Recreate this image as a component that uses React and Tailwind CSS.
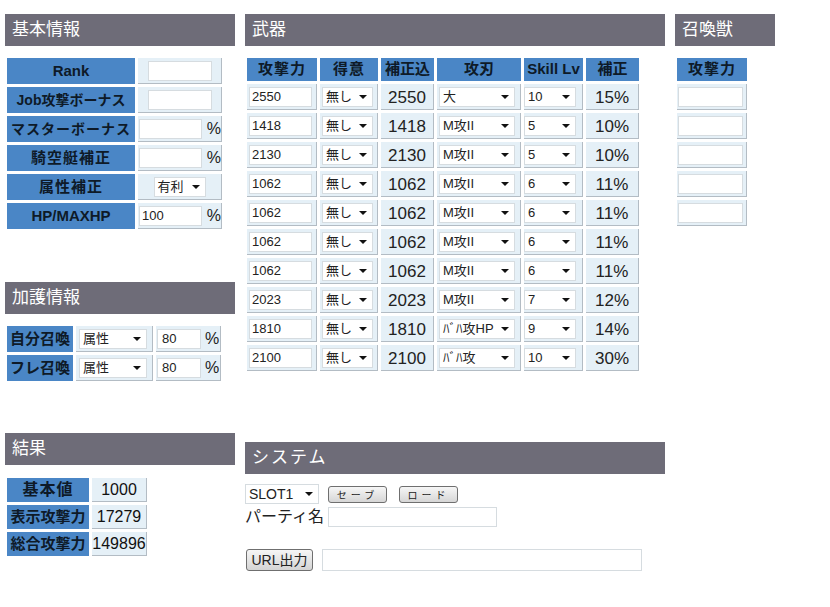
const font = { fontFamily: '"Liberation Sans", "Noto Sans CJK JP", sans-serif' }

const weapons = [
  { atk: 2550, blade: '大', lv: 10, hosei: '15%' },
  { atk: 1418, blade: 'M攻II', lv: 5, hosei: '10%' },
  { atk: 2130, blade: 'M攻II', lv: 5, hosei: '10%' },
  { atk: 1062, blade: 'M攻II', lv: 6, hosei: '11%' },
  { atk: 1062, blade: 'M攻II', lv: 6, hosei: '11%' },
  { atk: 1062, blade: 'M攻II', lv: 6, hosei: '11%' },
  { atk: 1062, blade: 'M攻II', lv: 6, hosei: '11%' },
  { atk: 2023, blade: 'M攻II', lv: 7, hosei: '12%' },
  { atk: 1810, blade: 'ﾊﾞﾊ攻HP', lv: 9, hosei: '14%' },
  { atk: 2100, blade: 'ﾊﾞﾊ攻', lv: 10, hosei: '30%' },
]

function Header({ title, className = '' }) {
  return (
    <div className={`h-[32px] bg-[#6e6c78] text-white text-[17px] flex items-center pl-[7px] ${className}`}>
      {title}
    </div>
  )
}

function Label({ children, className = '' }) {
  return (
    <div className={`bg-[#4a86c6] text-[#0e1a28] font-bold flex items-center justify-center whitespace-nowrap overflow-hidden ${className}`}>
      {children}
    </div>
  )
}

function Cell({ children, className = '' }) {
  return (
    <div className={`bg-[#e5f0f7] border-r border-b border-[#b3bcc4] flex items-center ${className}`}>
      {children}
    </div>
  )
}

function Input({ value = '', className = '' }) {
  return (
    <div className={`h-[20px] bg-white border border-[#d6dce0] text-[13px] text-[#222] flex items-center pl-[2px] ${className}`}>
      {value}
    </div>
  )
}

function Select({ text, className = '' }) {
  return (
    <div className={`h-[20px] bg-white border border-[#d6dce0] text-[13px] text-[#222] flex items-center justify-between pl-[3px] pr-[5px] ${className}`}>
      <span className="whitespace-nowrap">{text}</span>
      <span className="w-0 h-0 border-l-[4px] border-r-[4px] border-t-[4px] border-l-transparent border-r-transparent border-t-[#111]" />
    </div>
  )
}

export default function App() {
  return (
    <div style={font} className="min-h-screen bg-white flex items-start pt-[14px] pl-[5px]">
      {/* 左 */}
      <div className="w-[230px] flex flex-col">
        <Header title="基本情報" />
        <div className="mt-[12px] ml-[2px] grid grid-cols-[128px_84px] auto-rows-[26px] gap-[3px] text-[15px]">
          <Label>Rank</Label>
          <Cell className="justify-center"><Input className="w-[64px]" /></Cell>
          <Label className="text-[14px]">Job攻撃ボーナス</Label>
          <Cell className="justify-center"><Input className="w-[64px]" /></Cell>
          <Label className="text-[14px] tracking-[1px]">マスターボーナス</Label>
          <Cell className="pl-[1px] gap-[5px]"><Input className="w-[63px]" /><span className="text-[16px] text-[#222]">%</span></Cell>
          <Label className="tracking-[1px]">騎空艇補正</Label>
          <Cell className="pl-[1px] gap-[5px]"><Input className="w-[63px]" /><span className="text-[16px] text-[#222]">%</span></Cell>
          <Label className="tracking-[1px]">属性補正</Label>
          <Cell className="justify-center"><Select text="有利" className="w-[52px] bg-white" /></Cell>
          <Label>HP/MAXHP</Label>
          <Cell className="pl-[1px] gap-[5px]"><Input value="100" className="w-[63px]" /><span className="text-[16px] text-[#222]">%</span></Cell>
        </div>

        <Header title="加護情報" className="mt-[53px]" />
        <div className="mt-[12px] ml-[2px] grid grid-cols-[66px_77px_65px] auto-rows-[26px] gap-[3px] text-[15px]">
          <Label>自分召喚</Label>
          <Cell className="pl-[3px]"><Select text="属性" className="w-[68px]" /></Cell>
          <Cell className="pl-[1px] gap-[4px]"><Input value="80" className="w-[44px] pl-[4px]" /><span className="text-[16px] text-[#222]">%</span></Cell>
          <Label>フレ召喚</Label>
          <Cell className="pl-[3px]"><Select text="属性" className="w-[68px]" /></Cell>
          <Cell className="pl-[1px] gap-[4px]"><Input value="80" className="w-[44px] pl-[4px]" /><span className="text-[16px] text-[#222]">%</span></Cell>
        </div>

        <Header title="結果" className="mt-[52px]" />
        <div className="mt-[13px] ml-[2px] grid grid-cols-[82px_55px] auto-rows-[24px] gap-[3px]">
          <Label className="text-[16px] tracking-[1px]">基本値</Label>
          <Cell className="justify-center text-[16px] text-[#111]">1000</Cell>
          <Label className="text-[15px]">表示攻撃力</Label>
          <Cell className="justify-center text-[16px] text-[#111]">17279</Cell>
          <Label className="text-[15px]">総合攻撃力</Label>
          <Cell className="justify-center text-[16px] text-[#111]">149896</Cell>
        </div>
      </div>

      {/* 中央 */}
      <div className="w-[420px] ml-[10px] flex flex-col">
        <Header title="武器" />
        <div className="mt-[12px] ml-[2px] grid grid-cols-[70px_58px_53px_84px_59px_53px] grid-rows-[23px] auto-rows-[26px] gap-[3px] text-[15px]">
          <Label className="tracking-[1px]">攻撃力</Label>
          <Label className="tracking-[1px]">得意</Label>
          <Label>補正込</Label>
          <Label>攻刃</Label>
          <Label>Skill Lv</Label>
          <Label>補正</Label>
          {weapons.map((w, i) => (
            <div key={i} className="contents">
              <Cell className="pl-[2px]"><Input value={w.atk} className="w-[63px]" /></Cell>
              <Cell className="pl-[2px]"><Select text="無し" className="w-[51px] text-[12px]" /></Cell>
              <Cell className="justify-center pt-[2px] text-[17px] text-[#222]">{w.atk}</Cell>
              <Cell className="pl-[2px]"><Select text={w.blade} className="w-[76px] text-[12px]" /></Cell>
              <Cell className="pl-[0px]"><Select text={w.lv} className="w-[52px]" /></Cell>
              <Cell className="justify-center pt-[2px] text-[17px] text-[#222]">{w.hosei}</Cell>
            </div>
          ))}
        </div>

        <Header title="システム" className="mt-[71px] h-[31px] tracking-[2px]" />
        <div className="mt-[10px] flex items-center gap-[9px]">
          <Select text="SLOT1" className="w-[74px] h-[19px] text-[14px]" />
          <button className="h-[17px] w-[59px] rounded-[3px] border border-[#6f6f6f] bg-gradient-to-b from-[#f6f6f6] to-[#d6d6d6] text-[10px] tracking-[4px] text-[#222] pt-[3px] leading-none">セーブ</button>
          <button className="ml-[3px] h-[17px] w-[59px] rounded-[3px] border border-[#6f6f6f] bg-gradient-to-b from-[#f6f6f6] to-[#d6d6d6] text-[10px] tracking-[4px] text-[#222] pt-[3px] leading-none">ロード</button>
        </div>
        <div className="mt-[1px] flex items-center">
          <span className="text-[16px] text-[#222] w-[83px] whitespace-nowrap">パーティ名</span>
          <Input className="w-[169px] h-[20px]" />
        </div>
        <div className="mt-[20px] flex items-center gap-[9px]">
          <button className="ml-[1px] h-[22px] w-[67px] rounded-[3px] border border-[#6f6f6f] bg-gradient-to-b from-[#f6f6f6] to-[#d4d4d4] text-[14px] text-[#222] leading-none">URL出力</button>
          <Input className="w-[320px] h-[22px]" />
        </div>
      </div>

      {/* 右 */}
      <div className="w-[100px] ml-[10px] flex flex-col">
        <Header title="召喚獣" />
        <div className="mt-[12px] ml-[2px] grid grid-cols-[70px] grid-rows-[23px] auto-rows-[26px] gap-[3px] text-[15px]">
          <Label className="tracking-[1px]">攻撃力</Label>
          {[0, 1, 2, 3, 4].map((i) => (
            <Cell key={i} className="pl-[1px]"><Input className="w-[65px]" /></Cell>
          ))}
        </div>
      </div>
    </div>
  )
}
